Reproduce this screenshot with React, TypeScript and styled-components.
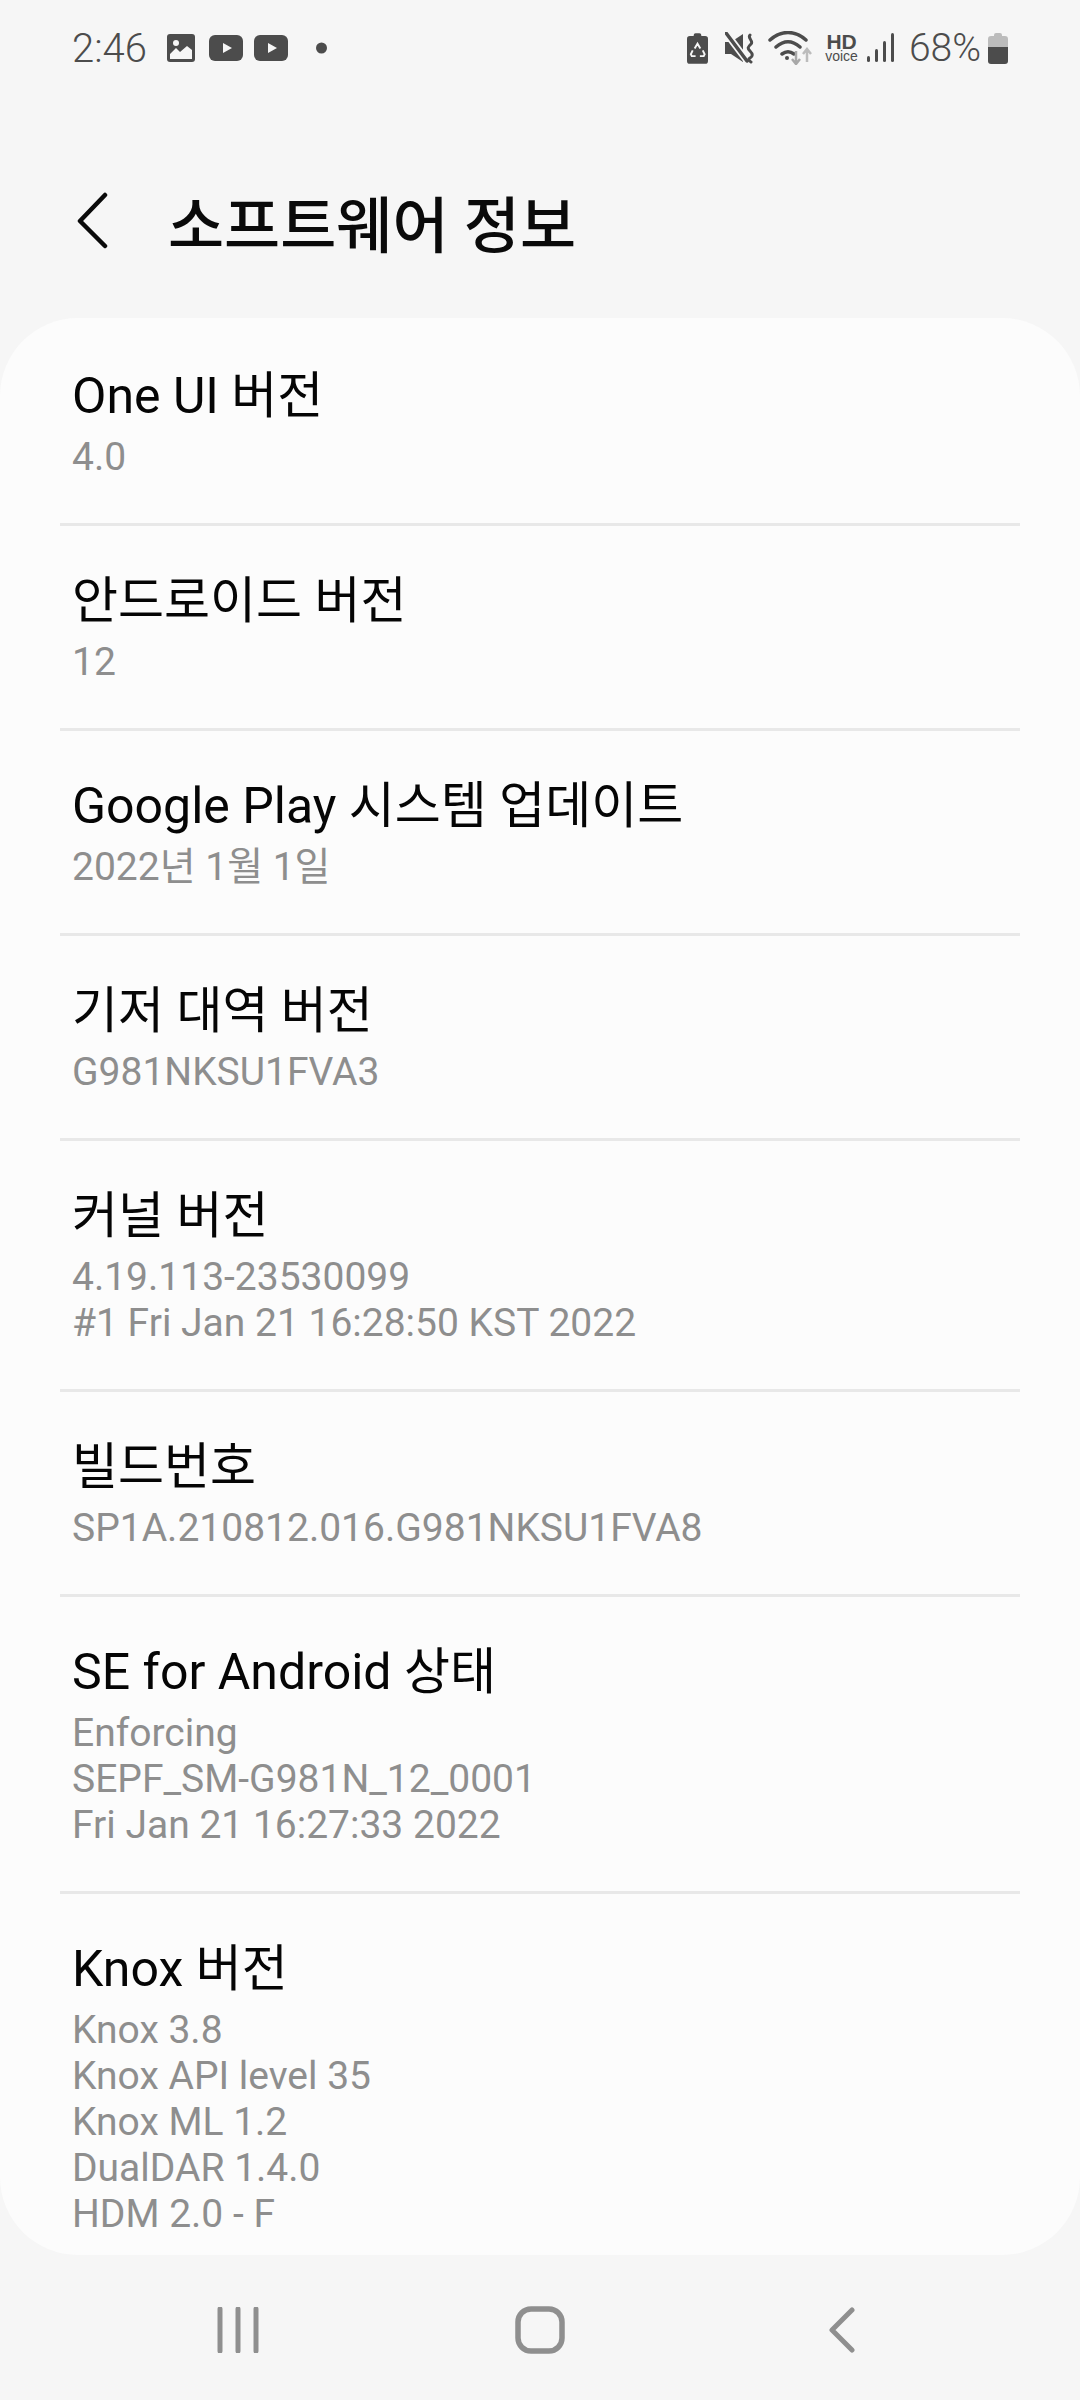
import styled, { createGlobalStyle } from "styled-components";

const Global = createGlobalStyle`
  html, body { margin: 0; padding: 0; background: #f6f6f6; }
  body { font-family: "Roboto", "Noto Sans CJK KR", sans-serif; }
`;

const Screen = styled.div`
  width: 1080px;
  height: 2400px;
  background: #f6f6f6;
  display: flex;
  flex-direction: column;
  overflow: hidden;
`;

const StatusBar = styled.div`
  height: 96px;
  padding: 0 72px;
  display: flex;
  align-items: center;
  justify-content: space-between;
  color: #4c4c4c;
  box-sizing: border-box;
`;

const StatusGroup = styled.div`
  display: flex;
  align-items: center;
`;

const Clock = styled.span`
  font-size: 40px;
  font-weight: 300;
  margin-right: 20px;
`;

const Percent = styled.span`
  font-size: 39px;
  font-weight: 300;
`;

const Header = styled.div`
  height: 222px;
  padding: 28px 0 0 72px;
  box-sizing: border-box;
  display: flex;
  align-items: center;
`;

const BackButton = styled.div`
  width: 96px;
  display: flex;
`;

const Title = styled.h1`
  margin: 0;
  font-size: 61px;
  font-weight: 500;
  color: #0a0a0a;
`;

const Card = styled.div`
  height: 1937px;
  background: #fcfcfc;
  border-radius: 78px;
  padding: 0 60px;
  box-sizing: border-box;
  overflow: hidden;
`;

const Row = styled.div<{ $last?: boolean }>`
  padding: 39px 12px 43px;
  box-sizing: border-box;
  border-bottom: ${(p) => (p.$last ? "none" : "3px solid #e8e8e8")};

  &:first-child {
    padding-top: 42px;
  }
`;

const RowTitle = styled.div`
  font-size: 50px;
  line-height: 72px;
  margin-bottom: 2px;
  color: #050505;
`;

const RowSub = styled.div`
  font-size: 39px;
  line-height: 46px;
  color: #8e8e8e;
`;

const NavBar = styled.div`
  flex: 1;
  display: grid;
  grid-template-columns: repeat(3, 302px);
  justify-content: center;
  align-items: center;
  justify-items: center;
  padding-top: 5px;
`;

const rows = [
  { title: "One UI 버전", sub: ["4.0"] },
  { title: "안드로이드 버전", sub: ["12"] },
  { title: "Google Play 시스템 업데이트", sub: ["2022년 1월 1일"] },
  { title: "기저 대역 버전", sub: ["G981NKSU1FVA3"] },
  { title: "커널 버전", sub: ["4.19.113-23530099", "#1 Fri Jan 21 16:28:50 KST 2022"] },
  { title: "빌드번호", sub: ["SP1A.210812.016.G981NKSU1FVA8"] },
  { title: "SE for Android 상태", sub: ["Enforcing", "SEPF_SM-G981N_12_0001", "Fri Jan 21 16:27:33 2022"] },
  { title: "Knox 버전", sub: ["Knox 3.8", "Knox API level 35", "Knox ML 1.2", "DualDAR 1.4.0", "HDM 2.0 - F"] },
];

const Gallery = () => (
  <svg width="28" height="28" viewBox="0 0 28 28" style={{ marginRight: 14 }}>
    <rect width="28" height="28" rx="3" fill="#4c4c4c" />
    <circle cx="9" cy="9" r="3" fill="#f6f6f6" />
    <path d="M3 25v-5l6-6 4 4 7-6 5 4v9z" fill="#f6f6f6" />
  </svg>
);

const Play = () => (
  <svg width="34" height="26" viewBox="0 0 34 26" style={{ marginRight: 11 }}>
    <rect width="34" height="26" rx="6" fill="#4c4c4c" />
    <path d="M14 8l9 5-9 5z" fill="#f6f6f6" />
  </svg>
);

const Recycle = () => (
  <svg width="21" height="31" viewBox="0 0 22 32" style={{ marginRight: 17 }}>
    <path d="M7 2q0-2 2-2h4q2 0 2 2v1h4q3 0 3 3v23q0 3-3 3H3q-3 0-3-3V6q0-3 3-3h4z" fill="#4c4c4c" />
    <path d="M8 16l3-5 3 5M16.500 18l2 4-1 2h-4M9 24H5l-1-2 2-4" stroke="#f6f6f6" strokeWidth="2" fill="none" />
  </svg>
);

const Mute = () => (
  <svg width="30" height="32" viewBox="0 0 30 32" style={{ marginRight: 13 }}>
    <path d="M0 10h6L18 2v28L6 22H0z" fill="#4c4c4c" />
    <path d="M1 1l22 29" stroke="#f6f6f6" strokeWidth="7" />
    <path d="M1 1l21 28" stroke="#4c4c4c" strokeWidth="3.500" strokeLinecap="round" />
    <path d="M25 3c-3 3 4 6 1 9s-4 4-1 7 3 5 0 7 0 3 1 4" stroke="#4c4c4c" strokeWidth="3" fill="none" strokeLinecap="round" />
  </svg>
);

const Wifi = () => (
  <svg width="45" height="34" viewBox="0 0 45 34" style={{ marginRight: 12 }}>
    <path d="M2 9c11-10 25-10 36 0M8 16c8-7 16-7 24 0M14 23c4-3 8-3 12 0" stroke="#4c4c4c" strokeWidth="3.500" fill="none" strokeLinecap="round" />
    <circle cx="19" cy="27" r="2" fill="#4c4c4c" />
    <path d="M28 20v13M24 28l4 5 4-5" stroke="#a8a8a8" strokeWidth="2.500" fill="none" />
    <path d="M39 31V18M35 23l4-5 4 5" stroke="#bcbcbc" strokeWidth="2.500" fill="none" />
  </svg>
);

const HdBadge = styled.span`
  display: inline-flex;
  flex-direction: column;
  align-items: center;
  margin-right: 9px;
  font-family: "Liberation Sans", sans-serif;
  line-height: 1;
`;

const HdTop = styled.span`
  font-size: 21px;
  font-weight: 700;
  line-height: 17px;
`;

const HdBottom = styled.span`
  font-size: 14px;
  line-height: 13px;
`;

const Signal = () => (
  <svg width="27" height="30" viewBox="0 0 27 30" style={{ marginRight: 15 }}>
    <rect x="0" y="23" width="3" height="6" rx="1.500" fill="#4c4c4c" />
    <rect x="8" y="16" width="3" height="13" rx="1.500" fill="#4c4c4c" />
    <rect x="16" y="8" width="3" height="21" rx="1.500" fill="#4c4c4c" />
    <rect x="24" y="0" width="3" height="29" rx="1.500" fill="#4c4c4c" />
  </svg>
);

const Battery = () => (
  <svg width="20" height="31" viewBox="0 0 20 31" style={{ marginLeft: 7 }}>
    <path d="M6 2q0-2 2-2h4q2 0 2 2v1h3q3 0 3 3v8H0V6q0-3 3-3h3z" fill="#bcbcbc" />
    <path d="M0 14h20v14q0 3-3 3H3q-3 0-3-3z" fill="#4c4c4c" />
  </svg>
);

export default function App() {
  return (
    <Screen>
      <Global />
      <StatusBar>
        <StatusGroup>
          <Clock>2:46</Clock>
          <Gallery />
          <Play />
          <Play />
          <svg width="11" height="12" viewBox="0 0 12 12" style={{ marginLeft: 17 }}>
            <circle cx="6" cy="6" r="6" fill="#4c4c4c" />
          </svg>
        </StatusGroup>
        <StatusGroup>
          <Recycle />
          <Mute />
          <Wifi />
          <HdBadge>
            <HdTop>HD</HdTop>
            <HdBottom>voice</HdBottom>
          </HdBadge>
          <Signal />
          <Percent>68%</Percent>
          <Battery />
        </StatusGroup>
      </StatusBar>
      <Header>
        <BackButton>
          <svg width="36" height="60" viewBox="0 0 36 60">
            <path d="M33 4L8 30l25 25" stroke="#0a0a0a" strokeWidth="4.500" fill="none" strokeLinecap="round" strokeLinejoin="round" />
          </svg>
        </BackButton>
        <Title>소프트웨어 정보</Title>
      </Header>
      <Card>
        {rows.map((r, i) => (
          <Row key={r.title} $last={i === rows.length - 1}>
            <RowTitle>{r.title}</RowTitle>
            {r.sub.map((s) => (
              <RowSub key={s}>{s}</RowSub>
            ))}
          </Row>
        ))}
      </Card>
      <NavBar>
        <svg width="42" height="46" viewBox="0 0 42 46">
          <path d="M3 2v42M21 2v42M39 2v42" stroke="#8f8f8f" strokeWidth="5" strokeLinecap="round" />
        </svg>
        <svg width="50" height="48" viewBox="0 0 50 48">
          <rect x="3" y="3" width="44" height="42" rx="13" stroke="#8f8f8f" strokeWidth="5.500" fill="none" />
        </svg>
        <svg width="26" height="46" viewBox="0 0 26 46">
          <path d="M23 3L3 23l20 20" stroke="#8f8f8f" strokeWidth="5" fill="none" strokeLinecap="round" strokeLinejoin="round" />
        </svg>
      </NavBar>
    </Screen>
  );
}
